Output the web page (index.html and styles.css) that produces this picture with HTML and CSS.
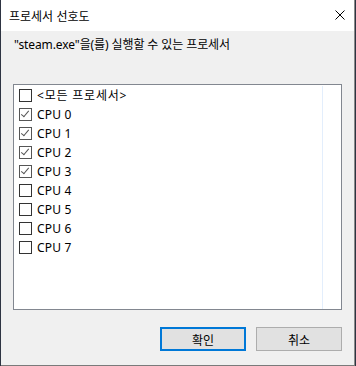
FILE: index.html
```html
<!DOCTYPE html>
<html lang="ko">
<head>
    <meta charset="UTF-8">
    <title>프로세서 선호도</title>
    <link rel="stylesheet" href="styles.css">
</head>
<body>
    <div class="window">
        <div class="titlebar">
            <span class="title">프로세서 선호도</span>
            <svg class="close" width="10" height="10" viewBox="0 0 10 10">
                <path d="M0.5 0.5 L9.5 9.5 M9.5 0.5 L0.5 9.5" stroke="#000" stroke-width="1" fill="none"/>
            </svg>
        </div>
        <div class="content">
            <p class="label">"steam.exe"을(를) 실행할 수 있는 프로세서</p>
            <div class="listbox">
                <div class="row"><span class="box"></span><span class="name all">&lt;모든 프로세서&gt;</span></div>
                <div class="row"><span class="box checked"></span><span class="name">CPU 0</span></div>
                <div class="row"><span class="box checked"></span><span class="name">CPU 1</span></div>
                <div class="row"><span class="box checked"></span><span class="name">CPU 2</span></div>
                <div class="row"><span class="box checked"></span><span class="name">CPU 3</span></div>
                <div class="row"><span class="box"></span><span class="name">CPU 4</span></div>
                <div class="row"><span class="box"></span><span class="name">CPU 5</span></div>
                <div class="row"><span class="box"></span><span class="name">CPU 6</span></div>
                <div class="row"><span class="box"></span><span class="name">CPU 7</span></div>
                <div class="guide"></div>
            </div>
            <div class="buttons">
                <button class="btn default">확인</button>
                <button class="btn">취소</button>
            </div>
        </div>
    </div>
</body>
</html>
```
FILE: styles.css
```css
body {
    margin: 0;
    background-color: #2e3442;
    font-family: "Segoe UI", "Noto Sans", "Noto Sans CJK KR", sans-serif;
    font-size: 12px;
    color: #000;
}
.window {
    margin-left: 1px;
    width: 353px;
    height: 365px;
    background-color: #f0f0f0;
    border-right: 1px solid #8a8a8a;
    border-bottom: 1px solid #7a7a7a;
}
.titlebar {
    height: 31px;
    background-color: #fff;
    display: flex;
    align-items: center;
    justify-content: space-between;
    padding: 0 9px 0 8px;
}
.title {
    font-family: "Noto Sans CJK KR", sans-serif;
    font-size: 12px;
    line-height: 16px;
}
.close {
    display: block;
    margin-top: -1px;
}
.content {
    padding: 0 12px;
}
.label {
    margin: 6px 0 0 1px;
    line-height: 16px;
    font-family: "Noto Sans", "Noto Sans CJK KR", sans-serif;
    letter-spacing: -0.1px;
}
.listbox {
    position: relative;
    margin-top: 31px;
    height: 223px;
    border: 1px solid #828790;
    background-color: #fff;
    padding-top: 1px;
    box-sizing: content-box;
}
.row {
    height: 19px;
    display: flex;
    align-items: center;
    padding-left: 5px;
}
.box {
    width: 11px;
    height: 11px;
    border: 1px solid #333;
    background-color: #fff;
    position: relative;
}
.box.checked {
    border-color: #555;
}
.box.checked::after {
    content: "";
    position: absolute;
    left: 3px;
    top: 0px;
    width: 3px;
    height: 7px;
    border-right: 1px solid #555;
    border-bottom: 1px solid #555;
    transform: rotate(40deg);
}
.name {
    margin-left: 5px;
    line-height: 16px;
    letter-spacing: 0.2px;
}
.name.all {
    letter-spacing: 0.8px;
}
.guide {
    position: absolute;
    left: 308px;
    top: 1px;
    bottom: 0;
    width: 1px;
    background-color: #e3eefc;
}
.buttons {
    display: flex;
    justify-content: flex-end;
    gap: 10px;
    margin-top: 17px;
}
.btn {
    width: 86px;
    height: 24px;
    background-color: #e1e1e1;
    border: 1px solid #adadad;
    font-family: "Noto Sans CJK KR", sans-serif;
    font-size: 12px;
    padding: 0;
    color: #000;
}
.btn.default {
    border: 2px solid #0078d7;
}
```
